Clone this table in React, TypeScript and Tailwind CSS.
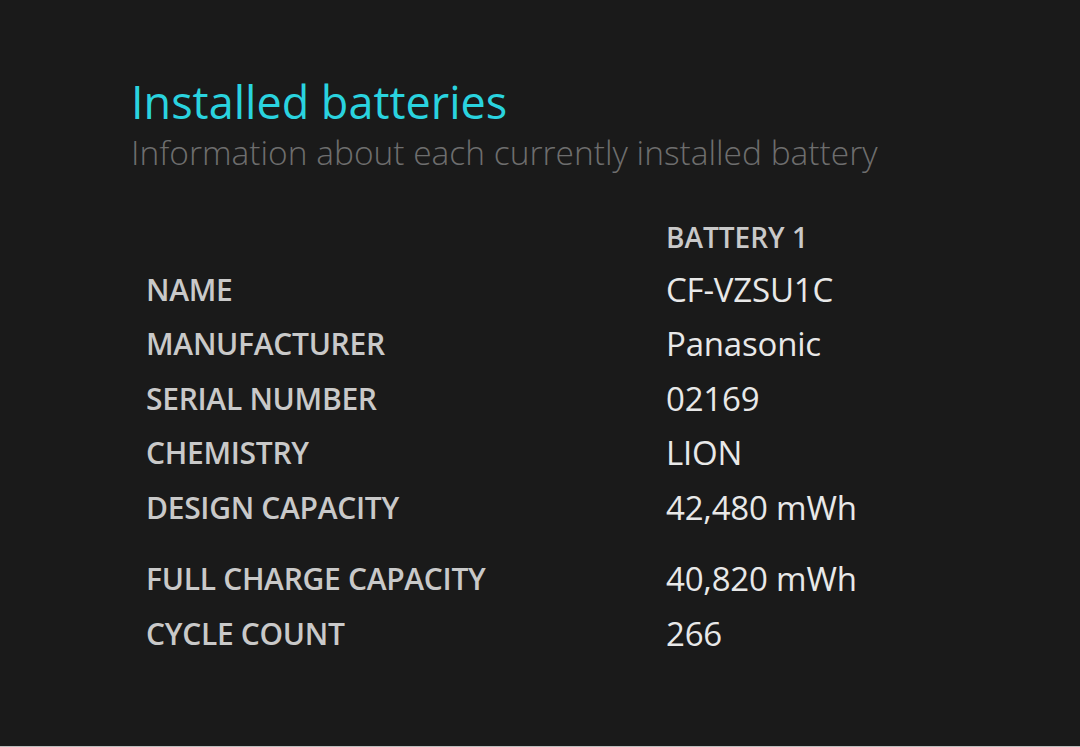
const rows: [string, string][] = [
  ['NAME', 'CF-VZSU1C'],
  ['MANUFACTURER', 'Panasonic'],
  ['SERIAL NUMBER', '02169'],
  ['CHEMISTRY', 'LION'],
  ['DESIGN CAPACITY', '42,480 mWh'],
];

const rows2: [string, string][] = [
  ['FULL CHARGE CAPACITY', '40,820 mWh'],
  ['CYCLE COUNT', '266'],
];

function Row({ label, value }: { label: string; value: string }) {
  return (
    <div className="grid grid-cols-[520px_1fr] items-center h-[54.5px]">
      <span className="text-[30px] font-semibold text-[#c9c9c9] tracking-[-0.3px]">{label}</span>
      <span className="text-[33px] text-[#e8e8e8] tracking-[-0.2px]">{value}</span>
    </div>
  );
}

export default function App() {
  return (
    <div
      className="w-[1080px] h-[747px] bg-[#1a1a1a] border-b border-[#bdbdbd] overflow-hidden"
      style={{ fontFamily: '"Open Sans", "Noto Sans", sans-serif' }}
    >
      <div className="pl-[131px] pt-[76px]">
        <h1 className="text-[45px] leading-[52px] font-medium text-[#2ad3df]">Installed batteries</h1>
        <p className="text-[33.5px] leading-[44px] mt-[2px] font-light text-[#6e6e6e]">Information about each currently installed battery</p>

        <div className="pl-[15px] mt-[42px]">
          <div className="grid grid-cols-[520px_1fr] items-center h-[40px]">
            <span />
            <span className="text-[28px] font-semibold text-[#c9c9c9]">BATTERY 1</span>
          </div>
          <div className="mt-[6px]">
            {rows.map(([l, v]) => (
              <Row key={l} label={l} value={v} />
            ))}
          </div>
          <div className="mt-[17px]">
            {rows2.map(([l, v]) => (
              <Row key={l} label={l} value={v} />
            ))}
          </div>
        </div>
      </div>
    </div>
  );
}
